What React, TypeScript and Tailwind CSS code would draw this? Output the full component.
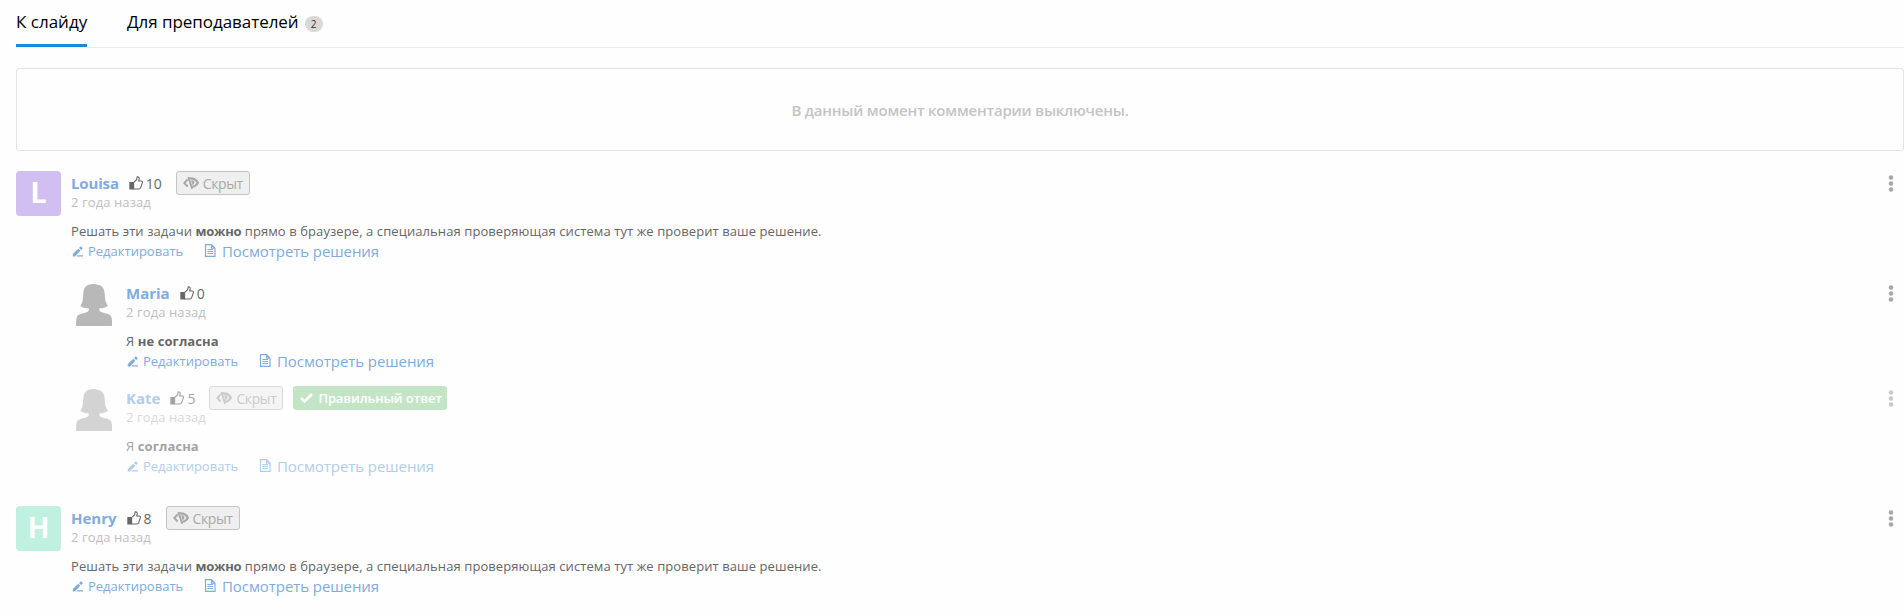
import { ReactNode } from "react";

type CommentData = {
  name: string;
  likes: number;
  hidden?: boolean;
  correct?: boolean;
  faded?: boolean;
  letter?: string;
  avatarClass?: string;
  nameClass: string;
  body: ReactNode;
};

const task = (
  <>
    Решать эти задачи <b className="font-bold tracking-[-0.25px]">можно</b> прямо в браузере, а специальная проверяющая система тут же
    проверит ваше решение.
  </>
);

function LikeIcon() {
  return (
    <svg className="h-[14px] w-[14px]" viewBox="0 0 14 14">
      <path d="M0.300 6h4.300v7.500H.3z" fill="#666" />
      <path
        d="M4.6 6.6 7.6 3.6 8.2.9c1.5-.3 2.2.7 2 2L9.7 5h2.4c1.2 0 1.6.9 1.2 1.9l-1.6 4.700c-.3.8-.8 1.4-1.8 1.4H4.6z"
        fill="none"
        stroke="#666"
        strokeWidth="1.1"
      />
    </svg>
  );
}

function HiddenIcon() {
  return (
    <svg className="h-[12px] w-[16px]" viewBox="0 0 16 12">
      <path d="M4.600 2.400 1.300 6l3.400 3.500" fill="none" stroke="#a8a8a8" strokeWidth="1.900" />
      <path d="M6 1.400C10 .9 13.400 2.800 14.900 5.700c-1.300 2.400-2.900 3.600-5.500 4.200" fill="none" stroke="#a8a8a8" strokeWidth="2.200" />
      <path d="M8.200 3.400c2.200-.4 3.300.8 3.200 2.400-.1 1.300-.8 2-1.900 2.300z" fill="#a8a8a8" />
      <path d="M5.400.1 9.200 11.900" stroke="#a8a8a8" strokeWidth="1.900" />
    </svg>
  );
}

function PenIcon() {
  return (
    <svg className="h-[11px] w-[12px]" viewBox="0 0 12 11">
      <path d="M.8 10.400V7.900L6.300 2.700 8.300 4.700 3 10.400z" fill="#80abe0" />
      <path d="M7 2 8.300.8c.4-.4.800-.4 1.100 0l1 1c.3.3.3.7 0 1.100L9.100 4.100z" fill="#80abe0" />
      <path d="M5.300 9.200h5.700v1.200H4.300z" fill="#80abe0" />
    </svg>
  );
}

function DocIcon() {
  return (
    <svg className="relative -top-px h-[13px] w-[12px]" viewBox="0 0 12 13">
      <path d="M1.500.7h6L11 4.200v8.200H1.500z M7.500.7v3.500H11" fill="none" stroke="#80abe0" strokeWidth="1.200" />
      <path d="M3.500 5.500h5.500M3.500 7.500h5.500M3.500 9.500h5.500" stroke="#80abe0" />
    </svg>
  );
}

function Silhouette() {
  return (
    <svg className="h-[45px] w-[45px]" viewBox="-0.7 0 45 45">
      <path
        d="M21.500 3C15.500 3 12 6 11.600 12c-.4 6-.6 10-3 13 2 1.600 5 2.300 8.400 2.300v2.500c-2.500 2.700-8 2.300-11 4.700-1.500 1.500-1.600 6-1.600 10.500h36c0-4.500 0-9-1.600-10.500-3-2.400-8.500-2-11-4.700v-2.500c3.400 0 6.400-.7 8.400-2.300-2.400-3-2.900-7-3.300-13C32.400 6.500 29.500 4 26 4c-1-.7-2.500-1-4.500-1z"
        fill="#b8b8b8"
      />
    </svg>
  );
}

function Comment({ data }: { data: CommentData }) {
  return (
    <article className={data.faded ? "flex opacity-60" : "flex"}>
      {data.letter ? (
        <div
          className={`flex h-[45px] w-[45px] shrink-0 items-center justify-center rounded-[4px] pb-[5px] text-[29px] leading-none font-bold text-white ${data.avatarClass}`}
        >
          {data.letter}
        </div>
      ) : (
        <div className="h-[45px] w-[45px] shrink-0">
          <Silhouette />
        </div>
      )}
      <div className="ml-[10px] flex-1">
        <div className="flex h-6 items-center">
          <span className={`text-[15px] leading-6 font-bold text-[#80abe0] ${data.nameClass}`}>{data.name}</span>
          <span className="ml-[10px] flex items-center text-[14px] leading-6 text-[#666]">
            <LikeIcon />
            <span className="ml-[3px] pt-[2px] leading-[22px]">{data.likes}</span>
          </span>
          {data.hidden && (
            <span className="ml-[14px] flex h-6 w-[74px] items-center rounded-[3px] border border-[#c4c4c4] bg-[#efefef] pl-[6px] text-[14px] tracking-[-0.4px] text-[#a8a8a8]">
              <HiddenIcon />
              <span className="ml-[4px]">Скрыт</span>
            </span>
          )}
          {data.correct && (
            <span className="ml-[10px] flex h-6 w-[154px] items-center rounded-[3px] bg-[#9fd6a0] pl-[7px] text-[13px] font-semibold text-white">
              <svg className="h-[12px] w-[13px]" viewBox="0 0 13 12">
                <path d="m1 6 3.500 3.500L12 2" fill="none" stroke="#fff" strokeWidth="2.600" />
              </svg>
              <span className="ml-[5px] pt-[2px] tracking-[-0.12px] whitespace-nowrap">Правильный ответ</span>
            </span>
          )}
          <svg className="mr-[10px] ml-auto h-[18px] w-[6px]" viewBox="0 0 6 18" fill="#a8a8a8">
            <circle cx="3" cy="3.500" r="2.300" />
            <circle cx="3" cy="9.500" r="2.300" />
            <circle cx="3" cy="15.500" r="2.300" />
          </svg>
        </div>
        <div className="h-[18px] text-[13px] leading-[14px] tracking-[0.1px] text-[#bfbfbf]">2 года назад</div>
        <p className="mt-[8px] h-5 text-[13px] leading-5 tracking-[0.085px] whitespace-nowrap text-[#666]">{data.body}</p>
        <div className="flex h-5 items-center text-[#80abe0]">
          <a className="flex w-[133px] items-center pl-px text-[13px] leading-5">
            <PenIcon />
            <span className="ml-1">Редактировать</span>
          </a>
          <a className="flex items-center text-[15px] leading-5 tracking-[-0.07px]">
            <DocIcon />
            <span className="ml-[6px]">Посмотреть решения</span>
          </a>
        </div>
      </div>
    </article>
  );
}

export default function App() {
  return (
    <main className="h-[616px] bg-[#fefefe] pl-4 font-['Open_Sans','Noto_Sans',sans-serif]">
      <nav className="flex h-12 border-b border-[#ececec] text-[17px] leading-6 text-black">
        <div className="mt-[10px] h-[37px] w-[71px] border-b-[3px] border-[#1f87d8] whitespace-nowrap">К слайду</div>
        <div className="mt-[10px] ml-10 flex whitespace-nowrap">
          <span className="tracking-[-0.05px]">Для преподавателей</span>
          <span className="mt-[6px] ml-[6px] flex h-4 w-[18px] items-center justify-center rounded-full bg-[#d9d9d9] text-[10px] text-[#333]">
            2
          </span>
        </div>
      </nav>
      <div className="mt-5 flex h-[83px] items-center justify-center rounded-[3px] border border-[#e3e3e3] pt-[2px] text-[15px] font-semibold tracking-[-0.22px] text-[#c4c4c4]">
        В данный момент комментарии выключены.
      </div>
      <div className="mt-5 flex flex-col">
        <div className="h-[110px]">
          <Comment data={{ name: "Louisa", likes: 10, hidden: true, letter: "L", avatarClass: "bg-[#d1bff1]", nameClass: "tracking-[-0.15px]", body: task }} />
        </div>
        <div className="ml-[55px] h-[105px]">
          <Comment data={{ name: "Maria", likes: 0, nameClass: "", body: <>Я <b>не согласна</b></> }} />
        </div>
        <div className="ml-[55px] h-[120px]">
          <Comment data={{ name: "Kate", likes: 5, hidden: true, correct: true, faded: true, nameClass: "", body: <>Я <b>согласна</b></> }} />
        </div>
        <Comment data={{ name: "Henry", likes: 8, hidden: true, letter: "H", avatarClass: "bg-[#c0f0df]", nameClass: "", body: task }} />
      </div>
    </main>
  );
}
